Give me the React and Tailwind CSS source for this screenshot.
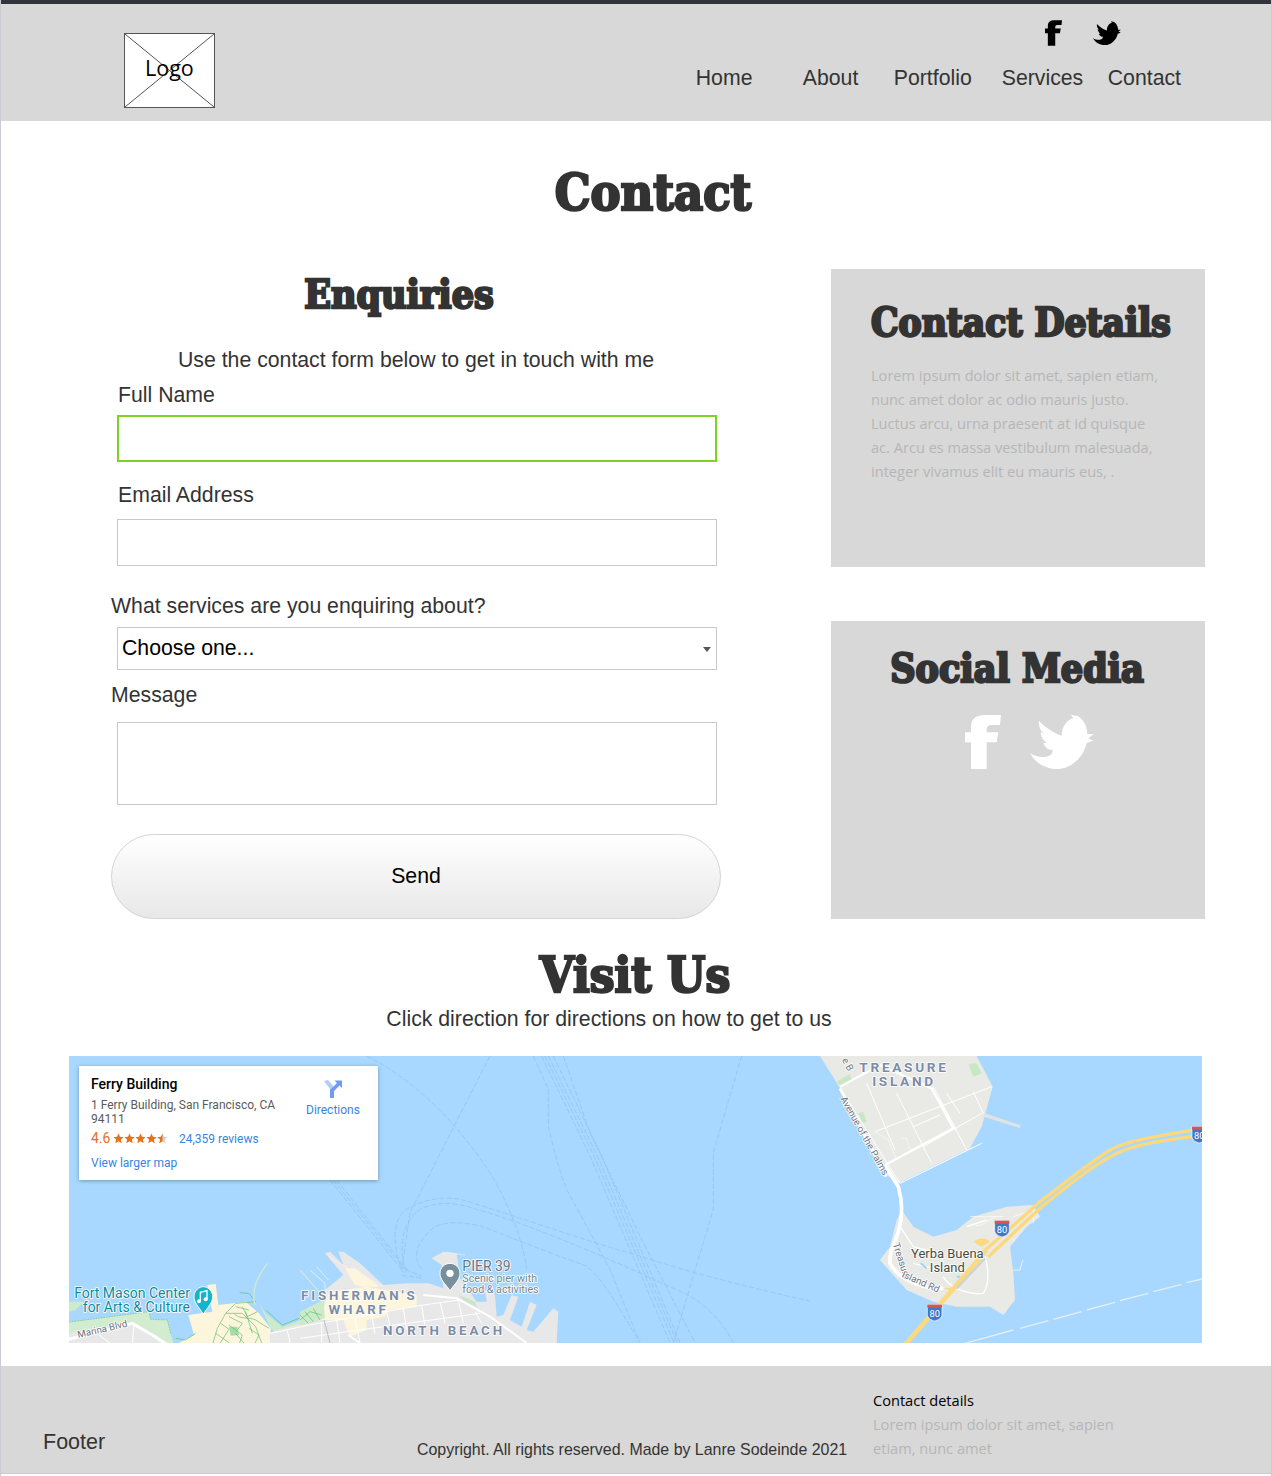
const FB = "M423 447V367H405V337H423V320C423 295 440 285 465 285H513L510 315H485C472 315 470 322 470 332V337H505L500 367H470V447Z";
const TW = "M627 305C650 330 680 345 695 350C695 320 715 300 730 298L722 287L745 292C765 305 772 330 772 345L792 345L775 358L790 365L770 372C760 415 725 450 680 450C645 450 615 430 600 403C620 415 650 420 665 405L668 392C655 395 645 385 640 372L650 372C640 365 632 352 632 340L642 345C630 335 625 320 627 305Z";

function Fb({ className }) {
  return (
    <svg viewBox="405 285 108 162" className={className} fill="currentColor">
      <path d={FB} />
    </svg>
  );
}
function Tw({ className }) {
  return (
    <svg viewBox="600 285 192 165" className={className} fill="currentColor">
      <path d={TW} />
    </svg>
  );
}

function Shield({ x, y }) {
  return (
    <g transform={`translate(${x} ${y})`}>
      <path d="M0 0H44V30C44 40 31 47 22 49C13 47 0 40 0 30Z" fill="#3f78c9" stroke="#fff" strokeWidth="2" />
      <rect x="0" y="0" width="44" height="9" fill="#d9534f" />
      <text x="22" y="37" textAnchor="middle" fontSize="28" fill="#fff" fontFamily="Roboto, sans-serif">80</text>
    </g>
  );
}

function Label({ x, y, size, fill, children, spacing, anchor, weight, rotate }) {
  return (
    <text
      x={x}
      y={y}
      fontSize={size}
      fill={fill}
      fontFamily="Roboto, sans-serif"
      fontWeight={weight || 400}
      letterSpacing={spacing || 0}
      textAnchor={anchor || "start"}
      stroke="#fff"
      strokeWidth="5"
      paintOrder="stroke"
      strokeLinejoin="round"
      transform={rotate ? `rotate(${rotate} ${x} ${y})` : undefined}
    >
      {children}
    </text>
  );
}

function MapDrawing() {
  return (
    <svg viewBox="69 1056 1133 287" className="block w-full h-full" preserveAspectRatio="none">
      <defs>
        <clipPath id="mapclip">
          <rect x="69" y="1056" width="1133" height="287" />
        </clipPath>
      </defs>
      <rect x="69" y="1056" width="1133" height="287" fill="#a8d8ff" />
      <g clipPath="url(#mapclip)">
        {/* shipping lanes */}
        <g transform="translate(290 1056) scale(0.33333)" fill="none" stroke="#8cbfee" strokeWidth="2.2" strokeDasharray="16 6" opacity="0.85">
          <path d="M230 0C350 60 480 170 600 350C660 450 700 560 710 640" />
          <path d="M600 0L495 205L360 470L335 640" />
          <path d="M730 0L775 100V210C790 280 810 350 830 400L960 640L1050 860" />
          <path d="M755 0L900 300L1140 860M765 0L912 300L1152 860M775 0L922 300L1162 860M790 0L935 300L1170 860" />
          <path d="M820 0L900 230L1060 560L1215 860" />
          <path d="M1355 0L1270 290V460L1150 860" />
          <path d="M120 372L335 640M130 372L345 640M140 372L355 645" />
          <path d="M340 650C310 590 300 490 350 460C400 430 460 420 510 430C620 460 900 560 1050 600C1200 650 1400 700 1560 735" />
          <path d="M350 650C325 590 330 490 400 455C450 435 500 440 560 460C700 500 900 580 1200 720C1250 750 1300 800 1330 860" />
          <path d="M395 640C365 600 380 560 430 515C470 490 550 500 600 520C700 560 830 610 890 630C950 680 1000 780 1050 860" />
          <path d="M335 658L395 666M345 640L395 660" />
        </g>

        {/* Fort Mason */}
        <g transform="translate(69 1270) scale(0.33333)">
          <path d="M0 95L45 95L20 120L0 125Z" fill="#cdeacb" />
          <path d="M8 155L240 125L245 148L295 150L305 190L315 225H0V160Z" fill="#d2ecd0" />
          <path d="M8 155L240 125L245 148L295 150L305 190" fill="none" stroke="#6fc07c" strokeWidth="2" strokeDasharray="5 3" />
          <path d="M0 190L190 155L310 225H0Z" fill="#e8e8e8" />
          <path d="M0 208L190 160L255 198L295 225" fill="none" stroke="#fff" strokeWidth="9" />
          <path d="M90 195L130 225M195 165L190 225" fill="none" stroke="#fff" strokeWidth="3" />
          <path d="M318 225L375 195L358 135L430 125L415 45L440 42L448 105L530 95L570 130L605 175V225Z" fill="#fdf6dc" />
          <path d="M570 100L590 130L640 170L720 140V155L620 190L605 175Z" fill="#cdeacb" />
          <path d="M605 187L720 152V225H605Z" fill="#e8e8e8" />
          <path d="M605 190L720 165M655 182L665 225" fill="none" stroke="#fff" strokeWidth="3" />
          <path d="M480 170L505 170L510 195L485 197Z" fill="#a9dba9" />
          <g fill="none" stroke="#5cbf6c" strokeWidth="2">
            <path d="M512 68L540 70L560 95L500 100L470 130L445 175L430 225" />
            <path d="M470 130L520 130L560 170L580 225M440 190L480 218M495 130C510 150 540 140 560 150" />
            <path d="M480 165L520 195L510 225M530 125L550 190M500 110L540 120M350 210L320 205M380 190L350 210" />
            <path d="M560 150L600 175M590 120L640 165L690 145M480 140L520 160L505 180M455 160L480 178L450 225M540 175L570 195L555 225" />
            <path d="M500 190L530 225M520 110L535 140L565 125" />
          </g>
          <path d="M558 105C545 55 570 15 595 -20" fill="none" stroke="#cfeccd" strokeWidth="4" />
        </g>

        {/* Fisherman's Wharf to Pier 39 */}
        <g transform="translate(300 1240) scale(0.33333)">
          <path d="M0 309V260L65 235L75 150L130 105L75 40L90 35L130 75L115 35L130 35L180 70L250 135L320 130L385 130L430 145L425 75L395 55L430 35L470 40L480 115L530 185L560 185L555 150L585 165L590 230L610 225L635 165L655 170L630 240L665 260L690 185L710 195L680 270L700 275L760 205L775 215L770 309Z" fill="#e8e8e8" />
          <path d="M135 85L165 85L240 140L190 140L165 135Z" fill="#fdf6dc" />
          <path d="M60 240L85 160L130 150L200 140L350 165L350 200L265 210L255 230L200 240L200 270L150 290L130 240Z" fill="#fdf6dc" />
          <path d="M0 215L70 180L75 235L0 258Z" fill="#cdeacb" />
          <g fill="none" stroke="#5cbf6c" strokeWidth="2">
            <path d="M0 240L30 215L65 225M15 215L40 245M40 205L60 240M0 225L25 250" />
          </g>
          <path d="M475 165L525 185L530 200L490 180Z" fill="#c5e6c0" />
          <g fill="none" stroke="#fff" strokeWidth="3">
            <path d="M0 260L370 195L480 180M0 295L250 260L540 220" />
            <path d="M65 250V309M110 240L120 309M165 235L180 309M215 225L225 280M260 215L275 280M310 205L320 270M365 195L375 260M420 185L435 250M475 180L490 250M525 215L545 250" />
            <path d="M370 165L470 175L570 230L680 309" strokeWidth="6" />
            <path d="M145 285L180 309" strokeWidth="6" />
            <path d="M90 55L250 140" strokeWidth="2" stroke="#f4f4f4" />
          </g>
          <path d="M30 90L75 130M50 80L85 120M75 130L75 150" fill="none" stroke="#e3f4f7" strokeWidth="2.5" />
          <path d="M0 90L70 170" fill="none" stroke="#e9f2c8" strokeWidth="3" />
          <path d="M72 240L90 309" stroke="#bcbcbc" strokeWidth="3" />
          <path d="M440 38L495 45" fill="none" stroke="#e8f2fa" strokeWidth="2" />
        </g>

        <g transform="translate(70 1230) scale(0.33333)">
          <path d="M400 252C385 230 370 215 372 197C374 180 388 170 400 170C412 170 426 180 428 197C430 215 415 230 400 252Z" fill="#12b5cb" stroke="#fff" strokeWidth="3" />
          <path d="M391 214V187L411 182V208" fill="none" stroke="#fff" strokeWidth="4" />
          <circle cx="387" cy="214" r="6" fill="#fff" />
          <circle cx="407" cy="208" r="6" fill="#fff" />
          <path d="M1140 182C1125 160 1110 150 1110 130C1110 112 1125 100 1140 100C1155 100 1170 112 1170 130C1170 150 1155 160 1140 182Z" fill="#78909c" stroke="#fff" strokeWidth="3" />
          <circle cx="1140" cy="130" r="11" fill="#fff" />

          <Label x="360" y="205" size="42" fill="#0a8a9a" anchor="end">Fort Mason Center</Label>
          <Label x="360" y="247" size="42" fill="#0a8a9a" anchor="end">for Arts &amp; Culture</Label>
          <Label x="25" y="324" size="29" fill="#6b7280" rotate="-13">Marina Blvd</Label>
          <Label x="868" y="211" size="40" fill="#7b8ca8" spacing="8.5" anchor="middle" weight="700">FISHERMAN'S</Label>
          <Label x="866" y="253" size="40" fill="#7b8ca8" spacing="8.5" anchor="middle" weight="700">WHARF</Label>
          <Label x="1122" y="316" size="40" fill="#7b8ca8" spacing="8.5" anchor="middle" weight="700">NORTH BEACH</Label>
          <Label x="1177" y="122" size="42" fill="#5f7380">PIER 39</Label>
          <Label x="1177" y="156" size="32" fill="#6f8592">Scenic pier with</Label>
          <Label x="1177" y="188" size="32" fill="#6f8592">food &amp; activities</Label>
        </g>

        {/* Treasure Island and the bridge */}
        <g transform="translate(800 1050) scale(0.33333)">
          <path d="M60 18H530L578 110L545 230L510 295L295 400L260 375L120 115Z" fill="#e9e9e6" />
          <path d="M555 190L662 226L660 234L550 200Z" fill="#dfe3e3" />
          <path d="M305 480L340 530L400 560L470 540L520 500L620 470L700 465L720 500L680 530L630 590L640 670L645 750L610 795L570 770L470 770L400 755L320 720L240 630L270 590L290 510Z" fill="#e9e9e6" />
          <path d="M505 42L530 40L545 70L520 80Z" fill="#c8e8c4" />
          <path d="M110 95L150 72L155 90L120 108Z" fill="#c8e8c4" />
          <path d="M175 190L190 185L200 215L188 220Z" fill="#c8e8c4" />
          <g fill="none" stroke="#fff" strokeWidth="3">
            <path d="M225 245L575 110M300 400L545 280M130 130L300 400M290 130L370 290L395 340M400 110L500 300M200 100L285 300M415 145L470 240M440 130L480 190M520 125L550 190M340 230L420 195M370 290L545 190" />
            <path d="M120 110L240 45L395 115L460 235L255 345" strokeWidth="7" />
            <path d="M225 245L265 270L290 330M305 265L320 265L330 300" strokeWidth="1.5" />
          </g>
          <path d="M255 345L295 410C310 460 305 510 295 545C285 580 265 610 270 640C290 680 360 720 430 715" fill="none" stroke="#fff" strokeWidth="11" />
          <path d="M120 115L258 380" stroke="#fff" strokeWidth="9" />
          <g fill="none" stroke="#fff" strokeWidth="4">
            <path d="M300 530L340 590L420 610M500 530L560 510M340 640L420 660M430 680C450 720 520 735 550 730C570 700 565 650 555 620" />
            <path d="M520 520C540 540 560 510 590 500M510 500L610 500M640 500L700 480L700 520" strokeWidth="2" />
          </g>
          <path d="M362 640L380 655" stroke="#9fd4fa" strokeWidth="6" />
          <path d="M470 680L480 680" stroke="#9fd4fa" strokeWidth="6" />
          <path d="M640 660L660 660L668 630" fill="none" stroke="#fff" strokeWidth="2" />
          <path d="M520 575C540 560 560 565 570 575L545 590Z" fill="#fcd97d" />
          <path d="M428 716L470 710L460 722Z" fill="#fcd97d" />
          <g fill="none" stroke="#fcd97d">
            <path d="M315 885L560 600" strokeWidth="14" />
            <path d="M545 610L720 455C800 395 880 330 930 300C1000 265 1100 255 1210 235" strokeWidth="10" />
            <path d="M565 620L725 470C800 410 880 345 940 315C1010 280 1100 270 1210 255" strokeWidth="10" />
          </g>
          <path d="M470 715L555 625" stroke="#cfd3d3" strokeWidth="7" />
          <path d="M495 880L560 862L640 840M660 835L745 812M760 808L845 785M860 780L945 757M960 752L1045 730M1060 725L1145 703M1160 698L1210 686" fill="none" stroke="#e5eef5" strokeWidth="4" />
          <Shield x="584" y="512" />
          <Shield x="382" y="764" />
          <Shield x="1176" y="230" />
          <Label x="312" y="67" size="41" fill="#7b8ca8" spacing="8" anchor="middle" weight="700">TREASURE</Label>
          <Label x="312" y="108" size="41" fill="#7b8ca8" spacing="8" anchor="middle" weight="700">ISLAND</Label>
          <Label x="442" y="625" size="39" fill="#444b3e" anchor="middle">Yerba Buena</Label>
          <Label x="442" y="665" size="39" fill="#444b3e" anchor="middle">Island</Label>
          <Label x="121" y="146" size="29" fill="#6b7280" rotate="61">Avenue of the Palms</Label>
          <Label x="278" y="582" size="29" fill="#6b7280" rotate="72">Treasure</Label>
          <Label x="304" y="680" size="29" fill="#6b7280" rotate="24">Island Rd</Label>
          <Label x="125" y="30" size="29" fill="#6b7280" rotate="61">e B</Label>
        </g>
      </g>
    </svg>
  );
}

function Star({ part }) {
  const d = "M6 0.5L7.6 4.2L11.6 4.6L8.6 7.2L9.5 11.2L6 9.1L2.5 11.2L3.4 7.2L0.4 4.6L4.4 4.2Z";
  return (
    <svg viewBox="0 0 12 12" className="w-[11px] h-[11px]">
      <path d={d} fill={part ? "#d0d0d0" : "#e7711b"} />
      {part && <path d="M6 0.5L6 9.1L2.5 11.2L3.4 7.2L0.4 4.6L4.4 4.2Z" fill="#e7711b" />}
    </svg>
  );
}

function Heading({ children, className }) {
  return (
    <h2 className={`font-['DejaVu_Serif_Condensed','DejaVu_Serif',serif] font-bold text-[#333] leading-none [-webkit-text-stroke:2.4px_#333] ${className}`}>
      {children}
    </h2>
  );
}

export default function App() {
  const label = "text-[21.25px] leading-6 text-[#333]";
  return (
    <div className="w-full h-[1476px] overflow-hidden bg-white border-x border-[#c9ccd0] font-['Liberation_Sans',sans-serif]">
      <div className="h-1 -mx-px bg-[#32343b]" />

      <header className="h-[117px] flex justify-between bg-[#d8d8d8]">
        <div className="relative ml-[123px] mt-[29px] w-[91px] h-[75px] bg-white border border-[#555]">
          <svg viewBox="0 0 89 73" preserveAspectRatio="none" className="absolute inset-0 w-full h-full">
            <path d="M0 0L89 73M89 0L0 73" stroke="#555" strokeWidth="1" />
          </svg>
          <span className="absolute left-[20px] top-[20px] text-[21.5px] leading-7 text-black font-['Open_Sans',sans-serif]">Logo</span>
        </div>
        <div className="flex flex-col items-start mr-[90px]">
          <div className="flex items-center ml-[349px] mt-[16px] gap-[31px] h-[26px] text-black">
            <Fb className="w-[17px] h-[26px]" />
            <Tw className="w-[28px] h-[26px]" />
          </div>
          <nav className="flex mt-[20px] text-[21.25px] leading-6 text-[#333]">
            <a className="w-[107px]">Home</a>
            <a className="w-[91px]">About</a>
            <a className="w-[108px]">Portfolio</a>
            <a className="w-[106px]">Services</a>
            <a>Contact</a>
          </nav>
        </div>
      </header>

      <main>
        <Heading className="text-[50px] text-center ml-[34px] mt-[47px]">Contact</Heading>

        <div className="flex mt-[51px] ml-[110px]">
          <section className="w-[610px]">
            <Heading className="text-[39px] text-center mr-[34px] pt-[6px]">Enquiries</Heading>
            <p className="mt-[34px] text-center text-[21.25px] leading-6 text-[#333]">Use the contact form below to get in touch with me</p>
            <div className={`${label} ml-[7px] mt-[11px]`}>Full Name</div>
            <input className="block ml-[6px] mt-[8px] w-[600px] h-[47px] border-2 border-[#7ed321] outline-none bg-white" />
            <div className={`${label} ml-[7px] mt-[21px]`}>Email Address</div>
            <input className="block ml-[6px] mt-[12px] w-[600px] h-[47px] border border-[#c8c8c8] outline-none bg-white" />
            <div className={`${label} mt-[28px]`}>What services are you enquiring about?</div>
            <div className="relative ml-[6px] mt-[9px] w-[600px] h-[43px]">
              <select className="block w-full h-full appearance-none border border-[#c8c8c8] bg-white pl-[4px] text-[21.25px] text-black outline-none">
                <option>Choose one...</option>
              </select>
              <span className="absolute right-[6px] top-[20px] w-0 h-0 border-x-[4px] border-x-transparent border-t-[5px] border-t-[#555]" />
            </div>
            <div className={`${label} mt-[13px]`}>Message</div>
            <textarea className="block ml-[6px] mt-[15px] w-[600px] h-[83px] border border-[#c8c8c8] outline-none bg-white resize-none" />
            <button className="block mt-[29px] w-[610px] h-[85px] rounded-full border border-[#d4d4d4] bg-gradient-to-b from-white to-[#e8e8e8] text-[21.25px] text-black">Send</button>
          </section>

          <aside className="ml-[110px] w-[374px]">
            <div className="h-[298px] bg-[#d8d8d8] pl-[40px] pt-[35px]">
              <Heading className="text-[38.5px] whitespace-nowrap">Contact Details</Heading>
              <p className="mt-[20px] w-[292px] text-[14.6px] leading-6 text-[#b6b6b6] font-['Open_Sans',sans-serif]">
                Lorem ipsum dolor sit amet, sapien etiam, nunc amet dolor ac odio mauris justo. Luctus arcu, urna praesent at id quisque ac. Arcu es massa vestibulum malesuada, integer vivamus elit eu mauris eus, .
              </p>
            </div>
            <div className="mt-[54px] h-[298px] bg-[#d8d8d8] pt-[28px]">
              <Heading className="text-[39px] text-center mr-[2px] whitespace-nowrap">Social Media</Heading>
              <div className="flex justify-center items-center mt-[26px] gap-[29px] ml-[22px] text-white">
                <Fb className="w-[36px] h-[54px]" />
                <Tw className="w-[64px] h-[55px]" />
              </div>
            </div>
          </aside>
        </div>

        <Heading className="text-[49px] text-center mt-[32px] w-[1268px]">Visit Us</Heading>
        <p className="mt-[7px] w-[1216px] text-center text-[21.25px] leading-6 text-[#333]">Click direction for directions on how to get to us</p>

        <div className="relative ml-[68px] mt-[25px] w-[1133px] h-[287px]">
          <MapDrawing />
          <div className="absolute left-[10px] top-[10px] w-[299px] h-[114px] bg-white shadow-[0_1px_4px_rgba(0,0,0,0.3)] font-['Roboto',sans-serif]">
            <div className="absolute left-[12px] top-[10px] text-[14px] leading-4 font-medium text-black">Ferry Building</div>
            <div className="absolute left-[12px] top-[32px] w-[200px] text-[12px] leading-[14px] text-[#5b5b5b]">1 Ferry Building, San Francisco, CA 94111</div>
            <div className="absolute left-[12px] top-[64px] flex items-center h-4 text-[14px] leading-4 text-[#e7711b]">
              4.6
              <span className="ml-[3px] flex">
                <Star /><Star /><Star /><Star /><Star part />
              </span>
            </div>
            <div className="absolute left-[100px] top-[66px] text-[12px] leading-[14px] text-[#3a84df]">24,359 reviews</div>
            <div className="absolute left-[12px] top-[90px] text-[12px] leading-[14px] text-[#3a84df]">View larger map</div>
            <svg viewBox="0 0 20 20" className="absolute left-[244px] top-[13px] w-[20px] h-[20px]">
              <path d="M1 2L5 1L11 8V19H7V10Z" fill="#b3cbf7" />
              <path d="M7 19V11L14 4L11.5 1.5H19V9L16.5 6.5L11 12V19Z" fill="#6f9bf1" />
            </svg>
            <div className="absolute left-[227px] top-[37px] text-[12px] leading-[14px] text-[#3a84df]">Directions</div>
          </div>
        </div>
      </main>

      <footer className="mt-[23px] h-[108px] -mx-px flex items-start bg-[#d8d8d8] border-b border-[#c9ccd0]">
        <div className="ml-[43px] mt-[64px] w-[374px] text-[21.5px] leading-6 text-[#333]">Footer</div>
        <div className="mt-[75px] w-[456px] text-[15.93px] leading-[18px] text-[#333]">Copyright. All rights reserved. Made by Lanre Sodeinde 2021</div>
        <div className="mt-[22px] w-[270px] text-[14.6px] leading-6 font-['Open_Sans',sans-serif] text-[#b6b6b6]">
          <div className="text-black">Contact details</div>
          <div>Lorem ipsum dolor sit amet, sapien</div>
          <div>etiam, nunc amet</div>
        </div>
      </footer>
    </div>
  );
}
